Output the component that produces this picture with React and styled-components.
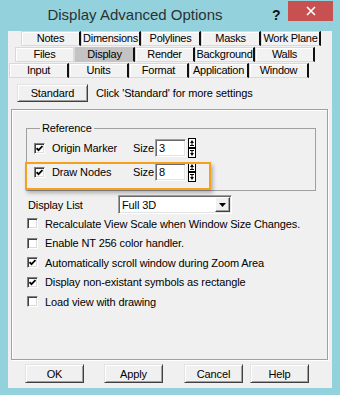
import React from 'react';
import styled, { createGlobalStyle } from 'styled-components';

const UI_FONT = `"Liberation Sans", Arial, sans-serif`;

const GlobalStyle = createGlobalStyle`
  html, body {
    margin: 0;
    padding: 0;
  }
  body {
    width: 340px;
    height: 395px;
    overflow: hidden;
    background: #93d2dc;
  }
  * {
    box-sizing: border-box;
  }
`;

const Frame = styled.div`
  width: 340px;
  height: 395px;
  background: #93d2dc;
  display: flex;
  flex-direction: column;
  font-family: ${UI_FONT};
  font-size: 11px;
  letter-spacing: -0.12px;
  color: #000;
`;

const TitleBar = styled.div`
  height: 31px;
  display: flex;
  align-items: flex-start;
  letter-spacing: 0;
`;

const Title = styled.div`
  flex: 0 0 270px;
  padding-top: 6px;
  text-align: center;
  font-size: 15px;
  line-height: 18px;
  color: #2b3133;
`;

const HelpMark = styled.div`
  flex: 0 0 18px;
  padding: 6px 0 0 2px;
  font-weight: bold;
  font-size: 14px;
  line-height: 18px;
  color: #111;
`;

const CloseBox = styled.div`
  width: 45px;
  height: 20px;
  margin-top: 1px;
  background: #c75050;
  display: flex;
  align-items: center;
  justify-content: center;
`;

const Client = styled.div`
  margin: 0 8px;
  height: 357px;
  background: #f0f0f0;
  display: flex;
  flex-direction: column;
`;

const TabRow = styled.div`
  display: flex;
  height: 16px;
  padding-left: ${p => p.$indent}px;
`;

const Tab = styled.div`
  width: 60px;
  height: 15px;
  line-height: 13px;
  text-align: center;
  white-space: nowrap;
  letter-spacing: -0.25px;
  background: ${p => (p.$active ? '#c3c3c3' : '#f2f2f2')};
  border: 1px solid ${p => (p.$active ? '#c3c3c3' : '#d9d9d9')};
  border-right: 2px solid ${p => (p.$plain ? '#d9d9d9' : '#111')};
  box-shadow: ${p => (p.$active ? 'none' : 'inset 1px 1px #fff')};
`;

const ActionRow = styled.div`
  display: flex;
  align-items: center;
  gap: 8px;
  height: 18px;
  margin-top: 5px;
  padding-left: 9px;
`;

const PushButton = styled.button`
  width: ${p => p.$w || 59}px;
  height: ${p => p.$h || 19}px;
  margin-left: ${p => p.$gap || 0}px;
  padding: 0;
  background: #f0f0f0;
  border: 1px solid;
  border-color: #e3e3e3 #404040 #404040 #e3e3e3;
  box-shadow: inset 1px 1px #fff, inset -1px -1px #a0a0a0;
  font-family: ${UI_FONT};
  font-size: 11px;
  letter-spacing: -0.12px;
  color: #000;
`;

const Panel = styled.div`
  width: 317px;
  height: 251px;
  margin: 7px 0 0 3px;
  padding: 11px 11px 0 14px;
  border: 1px solid #a0a0a0;
  box-shadow: inset 1px 1px #fff, 1px 1px #fff;
  display: flex;
  flex-direction: column;
`;

const Group = styled.fieldset`
  margin: 0;
  min-width: 0;
  padding: 4px 0 9px 7px;
  border: 1px solid #a0a0a0;
  display: flex;
  flex-direction: column;
  gap: 6px;
`;

const GroupLabel = styled.legend`
  margin-left: 6px;
  padding: 0 2px;
  line-height: 14px;
`;

const OptionRow = styled.div`
  position: relative;
  display: flex;
  align-items: center;
  height: 18px;

  &::after {
    content: '';
    display: ${p => (p.$highlight ? 'block' : 'none')};
    position: absolute;
    left: -9px;
    top: -1px;
    width: 182px;
    height: 24px;
    border: 2px solid #f5a01e;
    box-shadow: 2px 3px 4px rgba(0, 0, 0, 0.28);
    pointer-events: none;
  }
`;

const OptionLabel = styled.span`
  width: 81px;
  margin-left: 7px;
  white-space: nowrap;
`;

const SizeLabel = styled.span`
  margin-right: 1px;
`;

const Sunken = styled.div`
  width: ${p => p.$w}px;
  height: ${p => p.$h}px;
  background: #fff;
  border: 1px solid;
  border-color: #a0a0a0 #fff #fff #a0a0a0;
  box-shadow: inset 1px 1px #696969, inset -1px -1px #e3e3e3;
  display: flex;
  align-items: center;
  padding-left: 3px;
  line-height: 14px;
`;

const Spinner = styled.div`
  display: flex;
  flex-direction: column;
  margin-left: 2px;
`;

const Box = styled.span`
  width: 11px;
  height: 11px;
  flex: none;
  background: #fff;
  border: 1px solid;
  border-color: #808080 #fff #fff #808080;
  box-shadow: inset 1px 1px #404040, inset -1px -1px #dcdcdc;
  display: inline-flex;
  align-items: center;
  justify-content: center;
`;

const FieldRow = styled.div`
  display: flex;
  align-items: center;
  height: 19px;
  margin-top: 4px;
  padding-left: 2px;
`;

const FieldLabel = styled.span`
  width: 90px;
`;

const SelectBox = styled(Sunken)`
  justify-content: space-between;
  padding-right: 1px;
`;

const DropButton = styled.span`
  width: 15px;
  height: 15px;
  background: #f0f0f0;
  border: 1px solid;
  border-color: #fff #404040 #404040 #fff;
  box-shadow: inset -1px -1px #a0a0a0;
  display: flex;
  align-items: center;
  justify-content: center;
`;

const CheckRow = styled.div`
  display: flex;
  align-items: center;
  gap: 7px;
  height: 19.5px;
  padding-left: 1px;
  white-space: nowrap;
`;

const ButtonBar = styled.div`
  display: flex;
  margin-top: 4px;
  padding-left: 17px;
`;

const Check = ({ on }) => (
  <Box>
    {on && (
      <svg width="7" height="7" viewBox="0 0 7 7">
        <polyline points="0.5,3.2 2.5,5.2 6.5,1" fill="none" stroke="#000" strokeWidth="1.8" />
      </svg>
    )}
  </Box>
);

const SpinArrow = ({ down }) => (
  <svg width="8" height="10" viewBox="0 0 8 10" style={{ display: 'block' }}>
    <rect x="0.5" y="0.5" width="7" height="9" fill="#fff" stroke="#000" />
    <g transform={down ? 'rotate(180 4 5)' : undefined}>
      <polygon points="4,2 2,5 6,5" fill="#000" />
      <rect x="3.5" y="5" width="1" height="2" fill="#000" />
      <rect x="2" y="7" width="4" height="1" fill="#000" />
    </g>
  </svg>
);

const SizeOption = ({ label, value, checked, highlight }) => (
  <OptionRow $highlight={highlight}>
    <Check on={checked} />
    <OptionLabel>{label}</OptionLabel>
    <SizeLabel>Size</SizeLabel>
    <Sunken $w={31} $h={18}>{value}</Sunken>
    <Spinner>
      <SpinArrow />
      <SpinArrow down />
    </Spinner>
  </OptionRow>
);

const tabRows = [
  { indent: 13, tabs: ['Notes', 'Dimensions', 'Polylines', 'Masks', 'Work Plane'] },
  { indent: 7, tabs: ['Files', 'Display', 'Render', 'Background', 'Walls'] },
  { indent: 1, tabs: ['Input', 'Units', 'Format', 'Application', 'Window'] },
];

const options = [
  { label: 'Recalculate View Scale when Window Size Changes.', on: false },
  { label: 'Enable NT 256 color handler.', on: false },
  { label: 'Automatically scroll window during Zoom Area', on: true },
  { label: 'Display non-existant symbols as rectangle', on: true },
  { label: 'Load view with drawing', on: false },
];

export default function App() {
  return (
    <>
      <GlobalStyle />
      <Frame>
        <TitleBar>
          <Title>Display Advanced Options</Title>
          <HelpMark>?</HelpMark>
          <CloseBox>
            <svg width="10" height="10" viewBox="0 0 10 10">
              <path d="M1 1 L9 9 M9 1 L1 9" stroke="#fff" strokeWidth="1.6" />
            </svg>
          </CloseBox>
        </TitleBar>

        <Client>
          {tabRows.map(row => (
            <TabRow key={row.tabs[0]} $indent={row.indent}>
              {row.tabs.map(t => (
                <Tab key={t} $active={t === 'Display'} $plain={t === 'Files'}>
                  {t}
                </Tab>
              ))}
            </TabRow>
          ))}

          <ActionRow>
            <PushButton $w={71} $h={18}>Standard</PushButton>
            <span>Click 'Standard' for more settings</span>
          </ActionRow>

          <Panel>
            <Group>
              <GroupLabel>Reference</GroupLabel>
              <SizeOption label="Origin Marker" value="3" checked />
              <SizeOption label="Draw Nodes" value="8" checked highlight />
            </Group>

            <FieldRow>
              <FieldLabel>Display List</FieldLabel>
              <SelectBox $w={114} $h={19}>
                <span>Full 3D</span>
                <DropButton>
                  <svg width="7" height="4" viewBox="0 0 7 4">
                    <polygon points="0,0 7,0 3.5,4" fill="#000" />
                  </svg>
                </DropButton>
              </SelectBox>
            </FieldRow>

            {options.map(o => (
              <CheckRow key={o.label}>
                <Check on={o.on} />
                <span>{o.label}</span>
              </CheckRow>
            ))}
          </Panel>

          <ButtonBar>
            <PushButton>OK</PushButton>
            <PushButton $gap={20}>Apply</PushButton>
            <PushButton $gap={21}>Cancel</PushButton>
            <PushButton $gap={7}>Help</PushButton>
          </ButtonBar>
        </Client>
      </Frame>
    </>
  );
}
